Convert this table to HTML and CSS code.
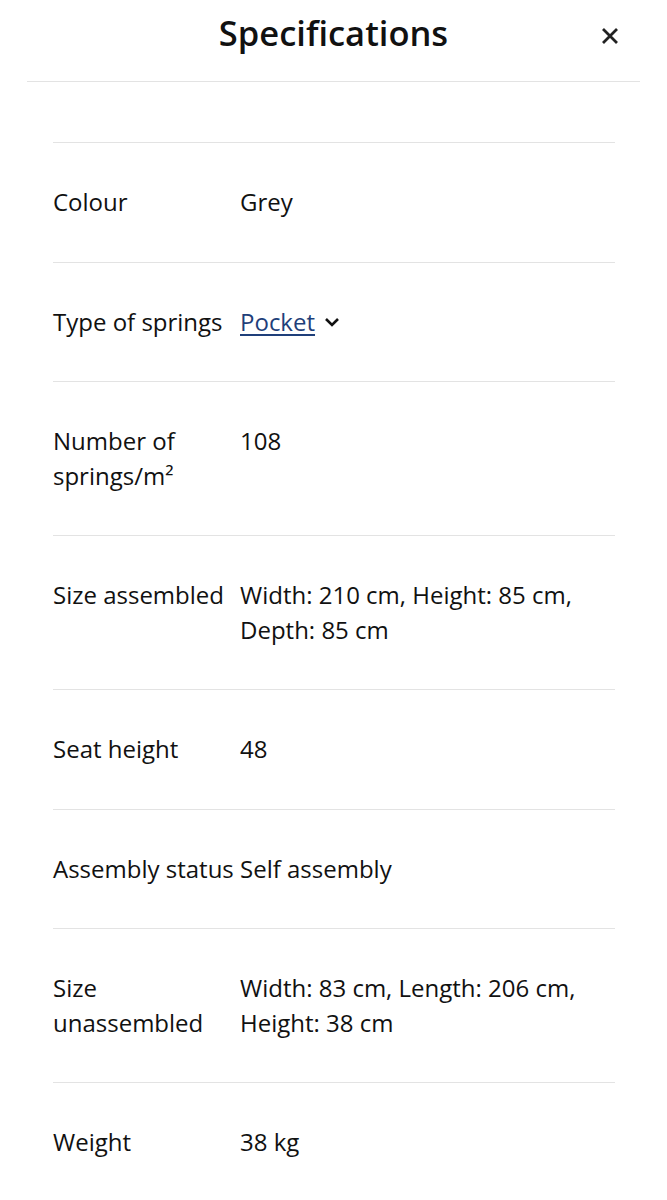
FILE: index.html
```html
<!DOCTYPE html>
<html lang="en">
<head>
<meta charset="utf-8">
<title>Specifications</title>
<link rel="stylesheet" href="styles.css">
</head>
<body>
<div class="sheet">
  <header class="sheet-header">
    <h1 class="sheet-title">Specifications</h1>
    <button class="close-btn" aria-label="Close">
      <svg viewBox="0 0 20 20" width="20" height="20"><path d="M3 3 L17 17 M17 3 L3 17" stroke="#222" stroke-width="2.8" stroke-linecap="butt" fill="none"/></svg>
    </button>
  </header>
  <dl class="spec-list">
    <div class="spec-row"><dt>Colour</dt><dd>Grey</dd></div>
    <div class="spec-row"><dt>Type of springs</dt><dd><a class="spec-link" href="#">Pocket</a><svg class="chev" viewBox="0 0 16 11" width="16" height="11"><path d="M2 2 L8 8 L14 2" stroke="#111" stroke-width="2.6" fill="none"/></svg></dd></div>
    <div class="spec-row"><dt>Number of springs/m²</dt><dd>108</dd></div>
    <div class="spec-row"><dt>Size assembled</dt><dd>Width: 210 cm, Height: 85 cm, Depth: 85 cm</dd></div>
    <div class="spec-row"><dt>Seat height</dt><dd>48</dd></div>
    <div class="spec-row"><dt>Assembly status</dt><dd>Self assembly</dd></div>
    <div class="spec-row"><dt>Size unassembled</dt><dd>Width: 83 cm, Length: 206 cm, Height: 38 cm</dd></div>
    <div class="spec-row"><dt>Weight</dt><dd>38 kg</dd></div>
  </dl>
</div>
</body>
</html>
```
FILE: styles.css
```css
* { box-sizing: border-box; }
html, body { margin: 0; padding: 0; background: #fff; }
body {
  font-family: "Open Sans", "Noto Sans", sans-serif;
  color: #111;
}
.sheet-header {
  position: relative;
  height: 82px;
  margin: 0 27px;
  border-bottom: 1px solid #e3e3e3;
  display: flex;
  justify-content: center;
  align-items: flex-start;
}
.sheet-title {
  margin: 0;
  padding-top: 9px;
  font-size: 34.5px;
  font-weight: 600;
  line-height: 48px;
  color: #111;
}
.close-btn {
  position: absolute;
  right: 20px;
  top: 26px;
  background: none;
  border: 0;
  padding: 0;
  width: 20px;
  height: 20px;
  cursor: pointer;
}
.close-btn svg { display: block; }
.spec-list {
  margin: 60px 52px 0 53px;
  padding: 0;
}
.spec-row {
  display: grid;
  grid-template-columns: 187px 1fr;
  border-top: 1px solid #e3e3e3;
  padding: 42px 0;
  font-size: 24px;
  line-height: 34.5px;
}
.spec-row dt, .spec-row dd { margin: 0; }
.spec-link {
  color: #1f3f7a;
  text-decoration: underline;
  text-underline-offset: 3px;
  text-decoration-thickness: 1.5px;
}
.chev {
  margin-left: 9px;
  vertical-align: 3px;
}
```
